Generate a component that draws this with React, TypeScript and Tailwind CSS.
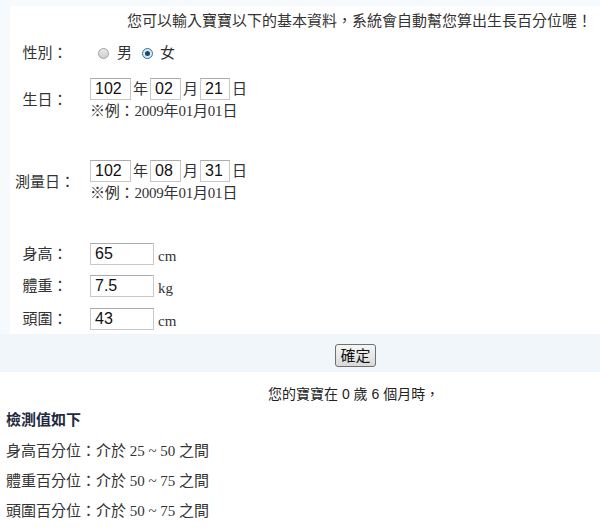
import React from "react";

const serif = { fontFamily: '"Liberation Serif", "Noto Sans CJK TC", serif' };
const sans = { fontFamily: '"Liberation Sans", "Noto Sans CJK TC", sans-serif' };

function Box({ value, w }: { value: string; w: string }) {
  return (
    <div
      className={`${w} h-[22px] border border-[#c8c8c8] border-t-[#ababab] bg-white flex items-center pl-[4px] text-[16px] text-[#111] leading-none`}
      style={sans}
    >
      {value}
    </div>
  );
}

function Radio({ checked }: { checked?: boolean }) {
  return (
    <span
      className={`inline-flex items-center justify-center w-[11px] h-[11px] rounded-full border ${
        checked ? "border-[#3a6f95] bg-[#dbe9f3]" : "border-[#a2a2a2] bg-gradient-to-b from-[#e9e9e9] to-[#cfcfcf]"
      }`}
    >
      {checked && <span className="w-[5px] h-[5px] rounded-full bg-[#174a73]" />}
    </span>
  );
}

function DateBlock({ label, y, m, d }: { label: string; y: string; m: string; d: string }) {
  return (
    <div className="flex items-center">
      <div className="w-[70px] text-center text-[15px]">{label}</div>
      <div className="ml-[10px] flex flex-col">
        <div className="flex items-center h-[22px] text-[15px]">
          <Box value={y} w="w-[41px]" />
          <span className="ml-[2px] mr-[2px] w-[15px]">年</span>
          <Box value={m} w="w-[31px]" />
          <span className="ml-[2px] mr-[2px] w-[15px]">月</span>
          <Box value={d} w="w-[30px]" />
          <span className="ml-[2px]">日</span>
        </div>
        <div className="h-[23px] flex items-center text-[15px] leading-none tracking-[-0.2px]">
          ※例：2009年01月01日
        </div>
      </div>
    </div>
  );
}

function Measure({ label, value, unit, mt }: { label: string; value: string; unit: string; mt: string }) {
  return (
    <div className={`flex items-center h-[22px] ${mt}`}>
      <div className="w-[70px] text-center text-[15px]">{label}</div>
      <div className="ml-[10px]">
        <Box value={value} w="w-[64px]" />
      </div>
      <span className="ml-[4px] mt-[4px] text-[15px]">{unit}</span>
    </div>
  );
}

export default function App() {
  return (
    <div className="w-[600px] h-[528px] bg-white text-[#333] overflow-hidden" style={serif}>
      <div className="bg-[#f7fafc] pl-[10px] pt-[6px]">
        <div className="bg-white h-[328px] flex flex-col">
          <div className="h-[30px] flex items-center justify-end pr-[8px] text-[15px]">
            您可以輸入寶寶以下的基本資料，系統會自動幫您算出生長百分位喔！
          </div>
          <div className="flex items-center h-[26px] mt-[4px]">
            <div className="w-[70px] text-center text-[15px]">性別：</div>
            <div className="ml-[18px] flex items-center text-[15px]">
              <Radio />
              <span className="ml-[8px]">男</span>
              <span className="ml-[10px] flex items-center">
                <Radio checked />
              </span>
              <span className="ml-[7px]">女</span>
            </div>
          </div>
          <div className="mt-[12px]">
            <DateBlock label="生日：" y="102" m="02" d="21" />
          </div>
          <div className="mt-[37px]">
            <DateBlock label="測量日：" y="102" m="08" d="31" />
          </div>
          <Measure label="身高：" value="65" unit="cm" mt="mt-[38px]" />
          <Measure label="體重：" value="7.5" unit="kg" mt="mt-[10px]" />
          <Measure label="頭圍：" value="43" unit="cm" mt="mt-[11px]" />
        </div>
      </div>
      <div className="h-[38px] bg-[#f0f6fa] pl-[335px] pt-[10px]">
        <button
          className="w-[41px] h-[23px] rounded-[3px] border border-[#707070] bg-gradient-to-b from-[#f6f6f6] to-[#d9d9d9] text-[15px] text-[#111] leading-none flex items-center justify-center"
          style={sans}
        >
          確定
        </button>
      </div>
      <div className="h-[28px] mt-[8px] flex items-center pl-[268px] text-[14px] text-[#222]" style={sans}>
        您的寶寶在 0 歲 6 個月時，
      </div>
      <div className="h-[24px] flex items-center pl-[6px] text-[15px] font-bold text-[#1f2a40]">檢測值如下</div>
      <div className="mt-[4px] pl-[6px] text-[15px] text-[#333]">
        <div className="h-[30px] flex items-center">身高百分位：介於 25 ~ 50 之間</div>
        <div className="h-[30px] flex items-center">體重百分位：介於 50 ~ 75 之間</div>
        <div className="h-[30px] flex items-center">頭圍百分位：介於 50 ~ 75 之間</div>
      </div>
    </div>
  );
}
